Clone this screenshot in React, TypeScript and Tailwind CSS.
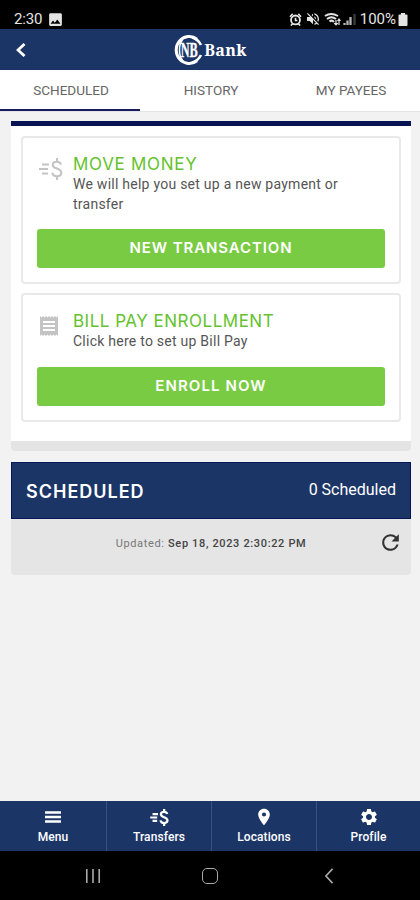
import type { ReactNode } from "react"
import { MdImage, MdPlace, MdReceipt, MdRefresh, MdSettings, MdVolumeOff } from "react-icons/md"

function MoneyIcon({ className, bold }: { className?: string; bold?: boolean }) {
    return (
        <svg viewBox="0 0 24 22" fill="none" stroke="currentColor" strokeWidth={bold ? 2.9 : 2.1} className={className}>
            <path d="M3 6.500h7M0 11h9M3 15.500h6" />
            <path d="M22 6.500C21.500 4.500 20 3.700 17.800 3.700c-2.400 0-4 1.200-4 3.200 0 4.600 8.500 2.800 8.500 7.800 0 2.200-1.800 3.500-4.400 3.500-2.500 0-4.200-1.200-4.600-3.500M18 0v4M18 18v4" />
        </svg>
    )
}

function Logo() {
    return (
        <svg viewBox="0 0 30 32" className="h-8 w-[30px]">
            <path d="M24 5.200A13 13.500 0 1 0 24 26.800" fill="none" stroke="white" strokeWidth="3" />
            <path d="M9.500 6Q6.500 9 6.500 16t3 10" fill="none" stroke="white" strokeWidth="1.500" />
            <path d="M19 3.500Q25 5 28 11M19 28.500Q25 27 28 21" fill="none" stroke="white" strokeWidth="2.600" />
            <text transform="translate(7.800 22.800) scale(.61 1)" fontSize="20" fill="white" stroke="white" strokeWidth=".4" fontFamily="Liberation Serif, serif" fontWeight="700">NB</text>
        </svg>
    )
}

function StatusBar() {
    return (
        <div className="flex h-[29px] items-end bg-black pr-[12px] pb-[2px] pl-[14px] text-[#e4e4e4]">
            <span className="w-[33px] text-[15px] leading-4 tracking-[-0.2px]">2:30</span>
            <MdImage className="-mb-px h-[17px] w-[17px]" />
            <div className="ml-auto flex h-4 items-center">
                <svg viewBox="0 0 14 14" className="mr-[3px] h-[13px] w-[13px]" fill="none" stroke="currentColor" strokeWidth="2">
                    <circle cx="7" cy="7.500" r="4.800" />
                    <path d="M1 4l3-3M13 4l-3-3M2 13.500l2-2M12 13.500l-2-2M7 5v3h2" strokeWidth="1.700" />
                </svg>
                <MdVolumeOff className="h-[16px] w-[16px]" />
                <svg viewBox="0 0 34 14" className="ml-[3px] h-[14px] w-[34px]" fill="none" stroke="currentColor">
                    <path d="M1 4Q7 0 14 4M3 7Q7.500 3.500 12 7M5.500 9.500Q8 7.500 10 10" strokeWidth="2" />
                    <path d="M12 8v5m-1.800-1.800L12 13l1.800-1.800M15 13V7m-1.500 2L15 7l1.500 2" strokeWidth="1.200" />
                    <path d="M20.500 13V11M23.500 13V8.500M26.500 13V5" strokeWidth="2.300" opacity=".8" />
                    <path d="M30.500 13V2" strokeWidth="2.500" opacity=".25" />
                </svg>
                <span className="ml-[2px] text-[15px] leading-4">100%</span>
                <svg viewBox="0 0 10 13" className="ml-[2px] h-[13px] w-[10px]" fill="currentColor">
                    <path d="M3 0h4v1.500h1.500q1 0 1 1V12q0 1-1 1h-7q-1 0-1-1V2.500q0-1 1-1H3z" />
                </svg>
            </div>
        </div>
    )
}

function ActionCard({ icon, title, text, action, className }: { icon: ReactNode; title: ReactNode; text: string; action: ReactNode; className: string }) {
    return (
        <div className={`flex flex-col rounded border-2 border-[#e9e9e9] px-[14px] pt-4 ${className}`}>
            <div className="flex">
                <div className="flex w-[36px] shrink-0 pt-[3px] text-[#c4c4c4]">{icon}</div>
                <div>
                    <h2 className="h-5 font-[Inter,sans-serif] text-[17px] leading-5 whitespace-nowrap text-[#65c22e]">{title}</h2>
                    <p className="text-sm leading-5 tracking-[0.25px] text-[#555]">{text}</p>
                </div>
            </div>
            <button className="mt-auto mb-[14px] h-[39px] rounded-[3px] bg-[#79cb43] font-[Inter,sans-serif] text-[15px] font-semibold text-white">
                {action}
            </button>
        </div>
    )
}

export default function App() {

    const tabs = ["SCHEDULED", "HISTORY", "MY PAYEES"]
    const nav = [
        {
            label: "Menu",
            icon: (
                <svg viewBox="0 0 16 12" className="h-3 w-4" stroke="currentColor" strokeWidth="2.300">
                    <path d="M0 1.500h16M0 6h16M0 10.500h16" />
                </svg>
            ),
        },
        { label: "Transfers", icon: <MoneyIcon bold className="h-[17px] w-[19px]" /> },
        { label: "Locations", icon: <MdPlace className="h-[20px] w-[20px]" /> },
        { label: "Profile", icon: <MdSettings className="h-5 w-5" /> },
    ]

    return (
        <div className="flex h-[900px] w-[420px] flex-col overflow-hidden bg-[#f2f2f2] font-[Roboto,sans-serif]">
            <StatusBar />
            <header className="grid h-[41px] grid-cols-[1fr_auto_1fr] items-center bg-[#1c3567] text-white">
                <svg viewBox="0 0 10 14" className="ml-4 h-[14px] w-[10px]" fill="none" stroke="currentColor" strokeWidth="2.800">
                    <path d="M8.500 1 2 7l6.500 6" />
                </svg>
                <div className="flex items-center">
                    <Logo />
                    <span className="ml-px font-['Noto_Serif','DejaVu_Serif',serif] text-[16px] leading-5 font-bold tracking-[0.3px]">Bank</span>
                </div>
            </header>
            <nav className="grid h-[42px] grid-cols-3 border-b border-[#e4e4e4] bg-white text-center text-[13.5px] leading-5 text-[#666]">
                {tabs.map((tab, i) => (
                    <div key={tab} className={`pt-[10px] pl-0.5 ${i === 0 ? "border-b-2 border-[#171b60]" : ""}`}>{tab}</div>
                ))}
            </nav>

            <main className="flex-1 pt-[9px] pr-[9px] pl-[11px]">
                <section className="h-[330px] overflow-hidden rounded-b border-t-5 border-b-10 border-t-[#071352] border-b-[#e4e4e4] bg-white px-[10px] pt-[10px]">
                    <ActionCard
                        className="h-[148px]"
                        icon={<MoneyIcon className="mt-px ml-[2px] h-[22px] w-6" />}
                        title={<span className="tracking-[0.7px]">MOVE MONEY</span>}
                        text="We will help you set up a new payment or transfer"
                        action={<span className="tracking-[0.9px]">NEW TRANSACTION</span>}
                    />
                    <ActionCard
                        className="mt-[9px] h-[129px]"
                        icon={<MdReceipt className="h-6 w-6" />}
                        title={<span className="tracking-[0.5px]">BILL PAY ENROLLMENT</span>}
                        text="Click here to set up Bill Pay"
                        action={<span className="tracking-[1.1px]">ENROLL NOW</span>}
                    />
                </section>

                <section className="mt-[11px] overflow-hidden rounded-b bg-[#e5e5e5]">
                    <div className="flex h-[57px] items-center justify-between border border-[#07145b] bg-[#1c3567] px-[14px] text-white">
                        <h2 className="pt-px font-[Inter,sans-serif] text-[18px] font-semibold tracking-[1px]">SCHEDULED</h2>
                        <span className="pb-[2px] text-base">0 Scheduled</span>
                    </div>
                    <div className="grid h-[56px] grid-cols-[32px_1fr_33px] items-start pt-[11px]">
                        <p className="col-start-2 pt-[6px] pl-px text-center text-[11px] leading-4 tracking-[0.65px] whitespace-nowrap text-[#777]">
                            Updated: <span className="font-medium text-[#444]">Sep 18, 2023 2:30:22 PM</span>
                        </p>
                        <MdRefresh className="h-[25px] w-[25px] text-[#333]" />
                    </div>
                </section>
            </main>

            <nav className="grid h-[50px] grid-cols-[107px_105px_105px_103px] bg-[#1c3567] text-white">
                {nav.map(({ label, icon }) => (
                    <div key={label} className="flex flex-col items-center border-r border-[#385083] pt-[6px] last:border-r-0">
                        <div className="flex h-5 items-center">{icon}</div>
                        <span className="pt-px text-xs leading-[18px] font-medium tracking-[0.1px]">{label}</span>
                    </div>
                ))}
            </nav>
            <div className="flex h-[49px] items-center bg-black pl-[84px] text-[#aaa]">
                <svg viewBox="0 0 18 18" className="h-[16px] w-[18px]" fill="none" stroke="currentColor" strokeWidth="1.800">
                    <path d="M2 1v16M9 1v16M16 1v16" />
                </svg>
                <div className="ml-[100px] h-4 w-4 rounded-[5px] border-[1.5px] border-[#aaa]" />
                <svg viewBox="0 0 10 18" className="ml-[106px] h-[16px] w-[10px]" fill="none" stroke="currentColor" strokeWidth="1.800">
                    <path d="M9 1 1.500 9 9 17" />
                </svg>
            </div>
        </div>
    )
}
